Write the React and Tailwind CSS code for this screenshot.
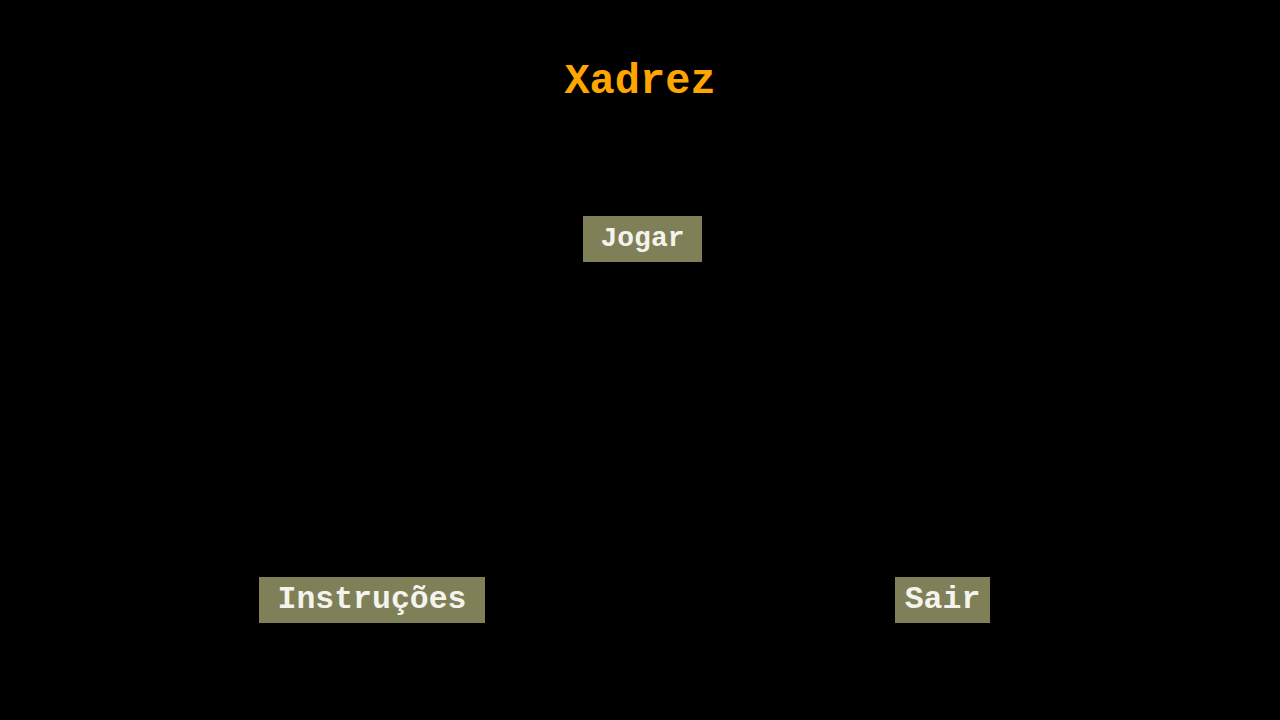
export default function App() {
  return (
    <div className="min-h-screen w-full bg-black flex flex-col" style={{ fontFamily: '"Liberation Mono", "Courier New", monospace' }}>
      {/* titulo */}
      <h1 className="mt-[58px] h-[48px] text-center text-[42px] leading-[48px] font-bold text-[#ffa500]">Xadrez</h1>

      {/* menu */}
      <div className="mt-[110px] flex justify-center pl-[5px]">
        <button className="h-[46px] w-[119px] bg-[#7f7f58] text-[28px] font-bold text-[#f4f4ec] leading-[46px]">Jogar</button>
      </div>

      <div className="mt-[315px] flex justify-between pl-[259px] pr-[290px]">
        <button className="h-[46px] w-[226px] bg-[#7f7f58] text-[31.5px] font-bold text-[#f4f4ec] leading-[46px]">Instruções</button>
        <button className="h-[46px] w-[95px] bg-[#7f7f58] text-[31.5px] font-bold text-[#f4f4ec] leading-[46px]">Sair</button>
      </div>
    </div>
  );
}
